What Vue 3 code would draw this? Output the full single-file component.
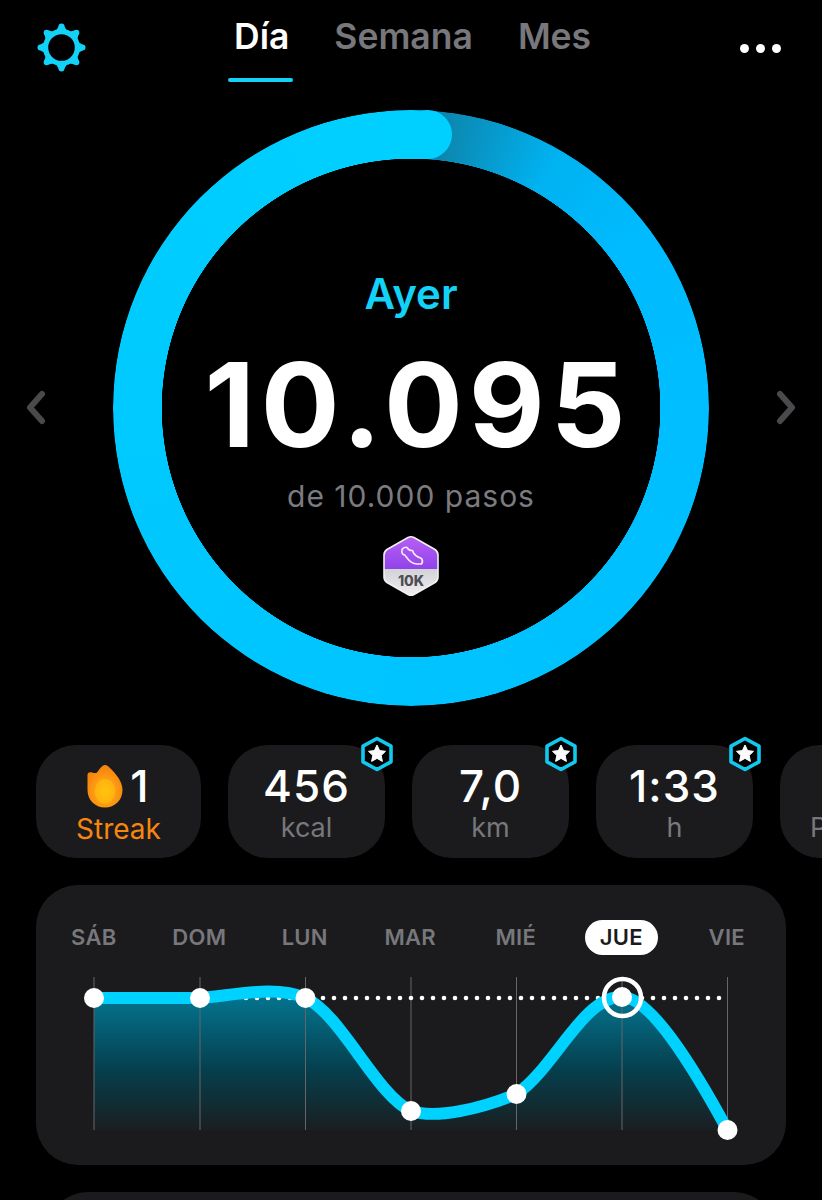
<script setup>
const tabs = [
  { label: 'Día', active: true },
  { label: 'Semana', active: false },
  { label: 'Mes', active: false }
]

const stats = [
  { value: '456', unit: 'kcal' },
  { value: '7,0', unit: 'km' },
  { value: '1:33', unit: 'h' }
]

const days = ['SÁB', 'DOM', 'LUN', 'MAR', 'MIÉ', 'JUE', 'VIE']

// chart coords, origin at the chart svg corner
const xs = [8, 114, 219.5, 325, 430.5, 536, 641.5]
const ys = [21, 21, 21, 134, 117, 20, 153]
const points = xs.map((x, i) => ({ x, y: ys[i] }))

const line = 'M8 21 L114 21 C150 18 190 8 219.5 21 C255 37 290 118 325 134 C350 142 395 132 430.5 117 C468 92 498 18 536 20 C565 20 610 95 641.5 153'
const area = line + ' L8 153 Z'

const dots = []
for (let x = 160; x < 638; x += 11) dots.push(x)

// gear teeth: a wedge from the ring out to a rounded tip
const teeth = []
for (let i = 0; i < 8; i++) {
  const a = (i / 8) * Math.PI * 2
  const c = Math.cos(a)
  const s = Math.sin(a)
  const at = (r, w) => (24.5 + r * c - w * s).toFixed(2) + ',' + (24.5 + r * s + w * c).toFixed(2)
  teeth.push({
    wedge: [at(16.5, 5.6), at(21, 3), at(21, -3), at(16.5, -5.6)].join(' '),
    x: 24.5 + 21 * c,
    y: 24.5 + 21 * s
  })
}
</script>

<template>
  <div class="page">
    <header class="top">
      <svg class="gear" width="49" height="49" viewBox="0 0 49 49">
        <circle cx="24.5" cy="24.5" r="15.9" fill="none" stroke="#13d2f8" stroke-width="5.2" />
        <template v-for="t in teeth">
          <polygon :points="t.wedge" fill="#13d2f8" />
          <circle :cx="t.x" :cy="t.y" r="3" fill="#13d2f8" />
        </template>
      </svg>
      <nav class="tabs">
        <div v-for="tab in tabs" class="tab" :class="{ active: tab.active }">{{ tab.label }}</div>
      </nav>
      <div class="more"><i></i><i></i><i></i></div>
    </header>

    <section class="hero">
      <svg class="chev" width="22" height="36" viewBox="0 0 22 36">
        <path d="M17 4 L5 17.5 L17 31" fill="none" stroke="#4a4a4d" stroke-width="6" stroke-linecap="round" stroke-linejoin="round" />
      </svg>

      <div class="ring-wrap">
        <div class="ring"></div>
        <div class="ring-cap"></div>
        <div class="ring-text">
          <div class="when">Ayer</div>
          <div class="steps">10.095</div>
          <div class="goal">de 10.000 pasos</div>
          <svg class="badge" width="58" height="64" viewBox="0 0 58 64">
            <defs>
              <linearGradient id="purple" x1="0" y1="0" x2="0" y2="1">
                <stop offset="0" stop-color="#bb62f6" />
                <stop offset="1" stop-color="#9143ea" />
              </linearGradient>
              <linearGradient id="silver" x1="0" y1="0" x2="0" y2="1">
                <stop offset="0" stop-color="#d2d2d7" />
                <stop offset="1" stop-color="#f2f2f4" />
              </linearGradient>
              <clipPath id="hex">
                <path d="M26 3.5 Q29 2 32 3.5 L53 15.5 Q56 17.5 56 21 L56 43 Q56 46.5 53 48.5 L32 60.5 Q29 62 26 60.5 L5 48.5 Q2 46.5 2 43 L2 21 Q2 17.5 5 15.5 Z" />
              </clipPath>
            </defs>
            <g clip-path="url(#hex)">
              <rect x="0" y="0" width="58" height="35" fill="url(#purple)" />
              <rect x="0" y="35" width="58" height="29" fill="url(#silver)" />
            </g>
            <path d="M26 3.5 Q29 2 32 3.5 L53 15.5 Q56 17.5 56 21 L56 43 Q56 46.5 53 48.5 L32 60.5 Q29 62 26 60.5 L5 48.5 Q2 46.5 2 43 L2 21 Q2 17.5 5 15.5 Z" fill="none" stroke="#f0f0f2" stroke-width="1.6" />
            <path d="M20 15.5 Q22 12.5 25 13.5 Q27 17 30.5 16.5 Q32 22 39.5 24.5 Q41.5 27.5 39.5 30 L35 30 Q29 29.5 25.5 24.5 Q23 20.5 20.5 20 Q19.5 17.5 20 15.5 Z" fill="none" stroke="#f6eefd" stroke-width="1.6" stroke-linejoin="round" />
            <text x="29" y="51.5" text-anchor="middle" class="badge-text">10K</text>
          </svg>
        </div>
      </div>

      <svg class="chev" width="22" height="36" viewBox="0 0 22 36">
        <path d="M5 4 L17 17.5 L5 31" fill="none" stroke="#4a4a4d" stroke-width="6" stroke-linecap="round" stroke-linejoin="round" />
      </svg>
    </section>

    <section class="stats">
      <div class="stat streak">
        <div class="value">
          <svg width="36" height="44" viewBox="0 0 36 44">
            <defs>
              <radialGradient id="flame" cx="0.5" cy="0.62" r="0.55">
                <stop offset="0" stop-color="#ffc30d" />
                <stop offset="0.5" stop-color="#ffb30f" />
                <stop offset="0.56" stop-color="#fd9c12" />
                <stop offset="1" stop-color="#f7860f" />
              </radialGradient>
            </defs>
            <path d="M18 1 C20 1 22 3 24 5 C30 11 35.5 18 35.5 26 C35.5 36 28 43.5 18 43.5 C8 43.5 0.5 36 0.5 26 L0.5 11 C0.5 8.5 3 8 5 8.5 C7 9 9 9.5 10 8.5 C12 6 15 1 18 1 Z" fill="url(#flame)" />
          </svg>
          <span>1</span>
        </div>
        <div class="unit">Streak</div>
      </div>

      <div v-for="stat in stats" class="stat">
        <div class="value">{{ stat.value }}</div>
        <div class="unit">{{ stat.unit }}</div>
        <svg class="star" width="36" height="38" viewBox="0 0 36 38">
          <path d="M18 3.5 L32 11.2 L32 26.8 L18 34.5 L4 26.8 L4 11.2 Z" fill="#000" stroke="#13c8ef" stroke-width="3.6" stroke-linejoin="round" />
          <path d="M18 10 L20.6 15.6 L26.5 16.3 L22.2 20.4 L23.4 26.4 L18 23.4 L12.6 26.4 L13.8 20.4 L9.5 16.3 L15.4 15.6 Z" fill="#fff" stroke="#fff" stroke-linejoin="round" />
        </svg>
      </div>

      <div class="stat clipped">
        <div class="value">&nbsp;</div>
        <div class="unit">P</div>
      </div>
    </section>

    <section class="chart-card">
      <div class="days">
        <div v-for="day in days" class="day" :class="{ today: day === 'JUE' }">
          <span>{{ day }}</span>
        </div>
      </div>
      <svg class="chart" width="660" height="170" viewBox="0 0 660 170">
        <defs>
          <linearGradient id="fill" x1="0" y1="20" x2="0" y2="153" gradientUnits="userSpaceOnUse">
            <stop offset="0" stop-color="#04748f" />
            <stop offset="0.55" stop-color="#053f4d" />
            <stop offset="1" stop-color="#1a1e21" />
          </linearGradient>
        </defs>
        <path :d="area" fill="url(#fill)" />
        <line v-for="x in xs" :x1="x" :x2="x" y1="0" y2="153" stroke="#66666a" stroke-width="1" />
        <circle v-for="x in dots" :cx="x" cy="21" r="2.3" fill="#fff" />
        <path :d="line" fill="none" stroke="#00d2ff" stroke-width="12" stroke-linecap="round" stroke-linejoin="round" />
        <circle v-for="p in points" :cx="p.x" :cy="p.y" r="10" fill="#fff" />
        <circle cx="536.5" cy="20.5" r="18.5" fill="none" stroke="#fff" stroke-width="4.5" />
      </svg>
    </section>

    <section class="next-card"></section>
  </div>
</template>

<style scoped>
.page {
  width: 822px;
  height: 1200px;
  overflow: hidden;
  background: #000;
  color: #fff;
  font-family: Inter, "Noto Sans", sans-serif;
}

.top {
  height: 110px;
  display: flex;
  align-items: flex-start;
  padding: 23px 41px 0 37px;
  box-sizing: border-box;
}

.tabs {
  display: flex;
  gap: 45px;
  margin-left: 148px;
}

.tab {
  font-size: 35.5px;
  font-weight: 600;
  line-height: 30px;
  height: 60px;
  color: #77777c;
  position: relative;
  margin-top: -1px;
}

.tab.active {
  color: #fff;
}

.tab.active::after {
  content: "";
  position: absolute;
  left: -6px;
  right: -4px;
  bottom: 0;
  height: 4px;
  border-radius: 2px;
  background: #13d2f8;
}

.more {
  display: flex;
  gap: 7px;
  margin: 21px 0 0 auto;
}

.more i {
  width: 9px;
  height: 9px;
  border-radius: 50%;
  background: #fff;
}

.hero {
  display: flex;
  align-items: center;
  justify-content: space-between;
  padding: 0 25px;
  height: 596px;
}

.ring-wrap {
  position: relative;
  width: 596px;
  height: 596px;
}

.ring {
  position: absolute;
  inset: 0;
  border-radius: 50%;
  background: conic-gradient(from 3.6deg, #0a7ea6 0deg, #0b8ab4 5deg, #00b2f0 26deg, #00bbff 50deg, #00c4ff 180deg, #00ccff 300deg, #00d0ff 360deg);
  -webkit-mask: radial-gradient(circle, transparent 249px, #000 249.5px);
  mask: radial-gradient(circle, transparent 249px, #000 249.5px);
}

.ring-cap {
  position: absolute;
  left: 290px;
  top: 0;
  width: 49px;
  height: 49px;
  border-radius: 50%;
  background: #00d0ff;
}

.ring-text {
  position: absolute;
  inset: 0;
  display: flex;
  flex-direction: column;
  align-items: center;
  padding-top: 158px;
  box-sizing: border-box;
}

.when {
  font-size: 42px;
  font-weight: 600;
  line-height: 52px;
  color: #13d2f8;
}

.steps {
  font-size: 117px;
  font-weight: 700;
  line-height: 130px;
  margin: 20px 0 0 14px;
  letter-spacing: 6px;
}

.goal {
  font-size: 30px;
  line-height: 34px;
  color: #7b7b80;
  margin-top: 9px;
  letter-spacing: 1px;
}

.badge {
  margin-top: 21px;
}

.badge-text {
  font-family: Inter, sans-serif;
  font-size: 14px;
  font-weight: 800;
  fill: #4f4f54;
}

.stats {
  display: flex;
  gap: 27px;
  padding-left: 36px;
  margin-top: 39px;
}

.stat {
  position: relative;
  flex: none;
  width: 157px;
  height: 113px;
  border-radius: 40px;
  background: #1b1b1d;
  display: flex;
  flex-direction: column;
  align-items: center;
  box-sizing: border-box;
  padding-top: 18px;
}

.stat.streak {
  width: 165px;
}

.stat.clipped {
  align-items: flex-start;
  padding-left: 30px;
}

.value {
  font-size: 44px;
  font-weight: 500;
  line-height: 46px;
  letter-spacing: 1px;
  display: flex;
  align-items: center;
  gap: 7px;
}

.unit {
  font-size: 27px;
  line-height: 34px;
  color: #77777c;
  margin-top: 2px;
}

.streak .unit {
  color: #f7860f;
  font-size: 28px;
  margin-top: 3px;
}

.star {
  position: absolute;
  right: -10px;
  top: -10px;
}

.chart-card {
  width: 750px;
  height: 280px;
  margin: 27px 0 0 36px;
  border-radius: 42px;
  background: #1b1b1d;
  box-sizing: border-box;
  padding: 35px 0 0 50px;
}

.days {
  display: flex;
  margin-left: -45px;
  width: 739px;
  height: 35px;
  margin-bottom: 22px;
}

.day {
  width: 105.5px;
  flex: none;
  display: flex;
  justify-content: center;
  align-items: center;
  font-size: 22px;
  font-weight: 600;
  letter-spacing: 0.3px;
  color: #77777c;
}

.day span {
  padding: 3px 15px;
  line-height: 29px;
  border-radius: 18px;
}

.day.today span {
  background: #fff;
  color: #1b1b1d;
}

.chart {
  display: block;
  overflow: visible;
}

.next-card {
  width: 730px;
  height: 60px;
  margin: 27px 0 0 46px;
  border-radius: 42px 42px 0 0;
  background: #1b1b1d;
}
</style>

<style>
html, body {
  background: #000;
}
</style>
